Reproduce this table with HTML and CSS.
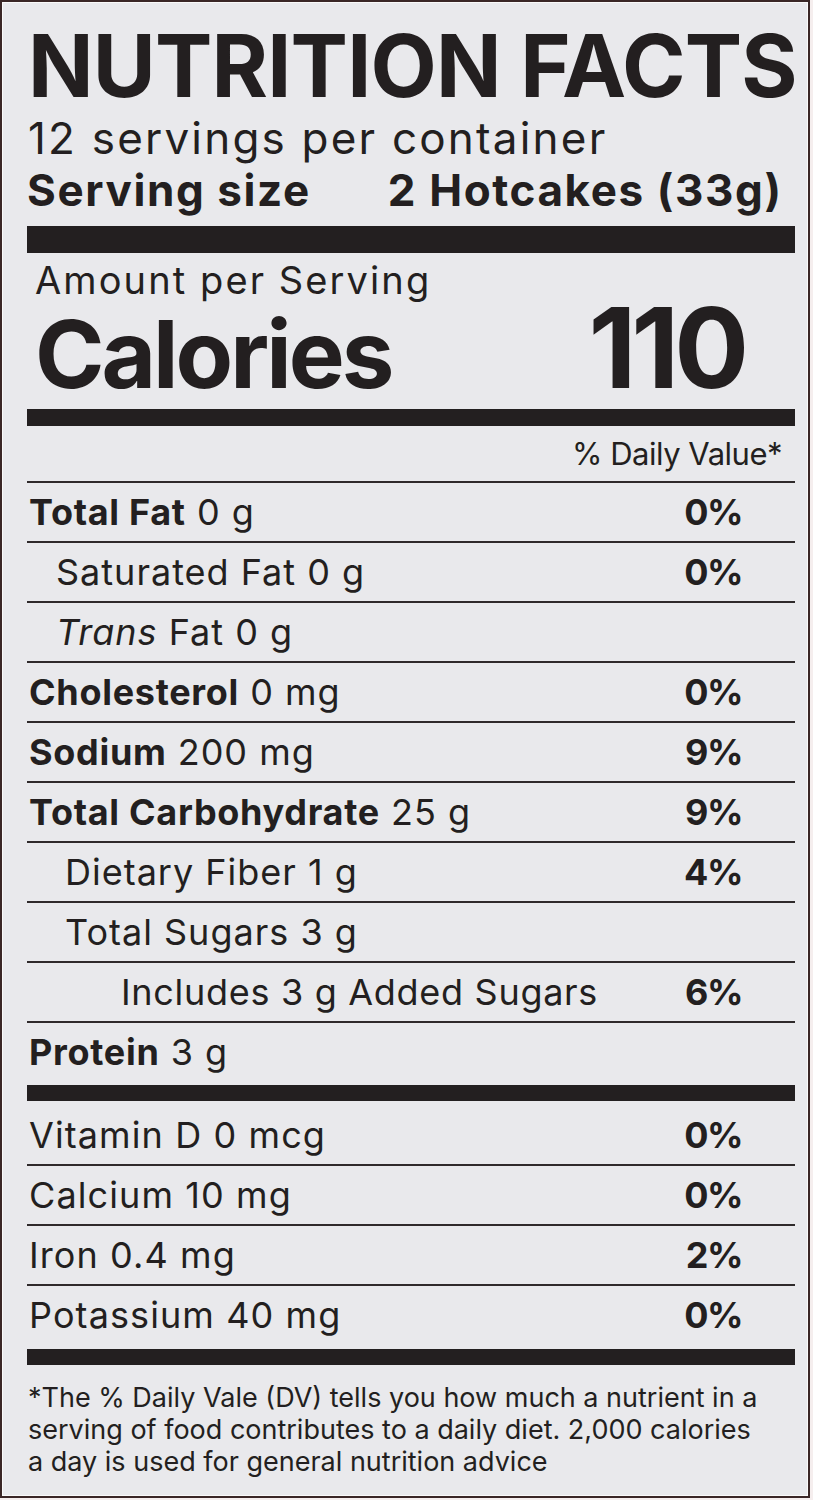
FILE: index.html
```html
<!DOCTYPE html>
<html lang="en">
<head>
<meta charset="utf-8">
<title>Nutrition Facts</title>
<link rel="stylesheet" href="styles.css">
</head>
<body>
<div class="label">
  <h1 class="title">NUTRITION FACTS</h1>
  <div class="servings">12 servings per container</div>
  <div class="serving-size"><span>Serving size</span><span>2 Hotcakes (33g)</span></div>
  <div class="bar bar-top"></div>
  <div class="amount">Amount per Serving</div>
  <div class="calories"><span class="cal-label">Calories</span><span class="cal-value">110</span></div>
  <div class="bar bar-mid"></div>
  <div class="dv-head">% Daily Value*</div>
  <div class="rows">
    <div class="row"><span><b>Total Fat</b> 0 g</span><b class="pct">0%</b></div>
    <div class="row ind1"><span>Saturated Fat 0 g</span><b class="pct">0%</b></div>
    <div class="row ind1"><span><i>Trans</i> Fat 0 g</span></div>
    <div class="row"><span><b>Cholesterol</b> 0 mg</span><b class="pct">0%</b></div>
    <div class="row"><span><b>Sodium</b> 200 mg</span><b class="pct">9%</b></div>
    <div class="row"><span><b>Total Carbohydrate</b> 25 g</span><b class="pct">9%</b></div>
    <div class="row ind2"><span>Dietary Fiber 1 g</span><b class="pct">4%</b></div>
    <div class="row ind2"><span>Total Sugars 3 g</span></div>
    <div class="row ind3"><span>Includes 3 g Added Sugars</span><b class="pct">6%</b></div>
    <div class="row last"><span><b>Protein</b> 3 g</span></div>
  </div>
  <div class="bar bar-low"></div>
  <div class="rows vitamins">
    <div class="row"><span>Vitamin D 0 mcg</span><b class="pct">0%</b></div>
    <div class="row"><span>Calcium 10 mg</span><b class="pct">0%</b></div>
    <div class="row"><span>Iron 0.4 mg</span><b class="pct">2%</b></div>
    <div class="row last"><span>Potassium 40 mg</span><b class="pct">0%</b></div>
  </div>
  <div class="bar bar-foot"></div>
  <p class="footnote">*The % Daily Vale (DV) tells you how much a nutrient in a<br>serving of food contributes to a daily diet. 2,000 calories<br>a day is used for general nutrition advice</p>
</div>
</body>
</html>
```
FILE: styles.css
```css
* { box-sizing: border-box; }
html, body {
  margin: 0;
  padding: 0;
  background: #f5eeee;
}
body {
  font-family: "Inter", "Liberation Sans", sans-serif;
  color: #231f20;
}
.label {
  width: 810px;
  height: 1498px;
  border: 2px solid #3a2626;
  background: #e9e9ec;
  box-shadow: inset 0 0 0 1px #fafafa;
  padding: 19px 13px 0 25px;
  overflow: hidden;
}
.title {
  margin: 0;
  font-size: 86px;
  line-height: 90px;
  font-weight: 700;
  letter-spacing: -0.8px;
  white-space: nowrap;
  padding-left: 1px;
}
.servings {
  font-size: 44px;
  line-height: 54px;
  font-weight: 400;
  letter-spacing: 2.2px;
  padding-left: 1px;
  white-space: nowrap;
}
.serving-size {
  display: flex;
  gap: 77px;
  font-size: 44px;
  line-height: 51px;
  font-weight: 700;
  letter-spacing: 1.6px;
  white-space: nowrap;
}
.bar { background: #231f20; }
.bar-top { height: 27px; margin-top: 10px; }
.amount {
  font-size: 38px;
  line-height: 55px;
  letter-spacing: 2.1px;
  padding-left: 8px;
  white-space: nowrap;
}
.calories {
  display: flex;
  align-items: baseline;
  justify-content: space-between;
  padding: 0 51px 0 8px;
  font-weight: 700;
}
.cal-label { font-size: 94px; line-height: 80px; letter-spacing: -3px; }
.cal-value { font-size: 111px; line-height: 80px; letter-spacing: -5px; }
.bar-mid { height: 17px; margin-top: 15px; }
.dv-head {
  text-align: right;
  font-size: 31px;
  line-height: 55px;
  padding-right: 13px;
  border-bottom: 2px solid #2f2a2b;
  letter-spacing: -0.5px;
}
.row {
  display: flex;
  justify-content: space-between;
  height: 60px;
  line-height: 58px;
  font-size: 36px;
  letter-spacing: 1px;
  border-bottom: 2px solid #2f2a2b;
  padding: 0 53px 0 2px;
  white-space: nowrap;
}
.row b { font-weight: 700; letter-spacing: 0.7px; }
.row .pct { font-weight: 700; letter-spacing: -1.5px; }
.row.last { border-bottom: none; height: 58px; }
.ind1 { padding-left: 29px; }
.ind2 { padding-left: 38px; }
.ind3 { padding-left: 94px; }
.ind3 span { letter-spacing: 0.7px; }
.bar-low { height: 16px; margin-top: 4px; }
.vitamins { padding-top: 5px; }
.vitamins .row { letter-spacing: 1.1px; }
.bar-foot { height: 16px; margin-top: 5px; }
.footnote {
  margin: 17px 0 0 0;
  font-size: 27px;
  line-height: 32px;
  letter-spacing: 0;
  white-space: nowrap;
  padding-left: 1px;
}
```
